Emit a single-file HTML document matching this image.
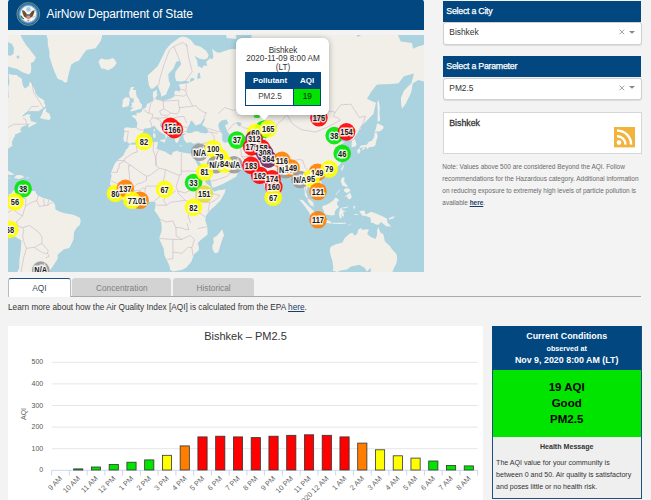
<!DOCTYPE html>
<html><head><meta charset="utf-8"><style>
html,body{margin:0;padding:0;width:651px;height:500px;overflow:hidden;background:#f3f3f3;font-family:"Liberation Sans",sans-serif}
.t{position:absolute;white-space:nowrap}
</style></head><body>
<div style="position:absolute;left:8px;top:-1px;width:416px;height:30.5px;background:#02477f;border-radius:4px 4px 0 0"></div>
<svg style="position:absolute;left:15px;top:2px" width="27" height="26" viewBox="0 0 27 26">
<circle cx="13.3" cy="12" r="11.4" fill="#1d5c97" stroke="#a7b46e" stroke-width="0.7"/>
<circle cx="13.3" cy="12" r="10.2" fill="#3f80bf"/>
<circle cx="13.3" cy="12" r="9" fill="#7fb3df"/>
<circle cx="13.3" cy="12" r="7.9" fill="#f6f6f2"/>
<circle cx="13.5" cy="7.4" r="2.3" fill="#a9cde0"/>
<path d="M7,8 L9.5,9 L11.5,11.5 L12.5,14.5 L11.5,16 L9,14.5 L7.5,11Z M19.6,8 L17.1,9 L15.1,11.5 L14.1,14.5 L15.1,16 L17.6,14.5 L19.1,11Z" fill="#6e4f2a"/>
<rect x="11.6" y="12.6" width="3.6" height="4.6" rx="1" fill="#e08a8e"/>
<rect x="11.6" y="12.4" width="3.6" height="1.3" fill="#3e5e9e"/>
<path d="M6,13.8 C6.5,15.5 7.5,16.5 9,17" stroke="#3f7f3a" stroke-width="1.3" fill="none"/>
<path d="M17.5,15.5 L20.5,14" stroke="#c8c8c0" stroke-width="0.9"/>
<path d="M12,18.2 L14.6,18.2 L13.3,19.4Z" fill="#7a6a50"/>
</svg>
<div class="t" style="left:46.50px;top:7.84px;font-size:12px;line-height:12px;color:#fff;letter-spacing:-0.12px">AirNow Department of State</div>
<div style="position:absolute;left:8px;top:35px;width:416px;height:237px;overflow:hidden"><svg width="416" height="237" viewBox="0 0 416 237" style="position:absolute;left:0;top:0"><rect width="416" height="237" fill="#aad3df"/><path d="M-36.6,121.2 -5.4,120.6 -4.6,117.2 -1.7,114.9 0.3,113.4 2.5,112.0 4.5,110.8 3.7,107.3 4.3,106.2 5.2,104.1 5.5,103.0 6.9,101.5 7.0,99.5 11.2,97.7 13.7,96.6 12.1,95.5 13.4,92.3 16.3,91.1 18.4,90.2 18.9,89.2 22.6,88.5 20.1,90.2 20.8,92.7 24.5,90.2 28.2,88.5 30.2,86.3 28.8,87.8 27.2,87.3 23.0,86.3 22.5,84.4 21.6,81.6 23.0,79.9 19.8,79.1 13.7,81.9 16.3,78.8 19.8,76.2 23.8,76.0 30.5,76.2 35.4,73.1 37.7,70.9 35.6,66.7 37.2,67.3 35.1,64.4 30.5,62.1 27.7,58.5 26.3,53.8 23.8,49.0 22.1,46.3 20.5,51.3 16.4,53.5 14.6,49.6 13.7,43.5 10.5,41.8 8.7,40.0 4.3,39.7 0.5,38.9 1.5,47.3 0.1,52.4 0.7,62.1 -1.9,65.3 -1.4,72.8 -36.6,74.1Z M31.7,82.9 33.9,79.4 35.1,75.5 38.1,72.5 37.9,76.8 41.3,78.6 42.8,83.1 41.4,85.1 37.6,84.4 31.7,82.9Z M8.7,-42.7 20.5,-29.2 33.0,-24.4 37.2,-14.8 38.1,-0.6 39.8,4.6 39.8,9.5 41.4,16.4 41.4,21.7 43.1,27.1 45.1,33.0 47.3,38.6 49.8,43.9 54.0,45.3 56.6,47.6 59.1,47.0 59.9,42.1 61.6,35.6 63.3,29.5 67.5,26.7 70.8,25.8 75.9,18.2 78.4,15.1 87.6,13.2 92.7,6.1 94.0,2.0 94.3,-6.0 97.7,-21.1 101.1,-42.7 89.3,-81.9 30.5,-81.9Z M90.5,27.1 93.2,33.4 96.0,33.7 100.2,35.2 104.4,33.0 106.9,30.7 108.6,27.9 106.4,24.2 104.4,22.9 101.1,24.6 96.9,24.6 93.5,23.4 91.8,24.6Z M121.7,76.5 125.4,76.0 133.6,73.6 134.1,69.5 131.8,67.6 131.1,64.4 128.6,61.2 127.8,56.6 128.3,55.1 124.6,55.1 126.2,51.9 122.9,51.9 120.9,57.9 121.9,62.1 123.1,63.3 125.6,63.3 125.9,67.3 123.4,67.8 124.2,70.6 122.4,72.0 125.9,73.1 124.2,73.6Z M121.2,67.8 120.7,70.9 115.3,72.5 114.0,71.2 114.8,67.3 114.5,65.3 117.3,62.4 121.0,62.4 122.0,65.0Z M121.9,108.9 120.7,108.1 118.9,106.6 116.2,107.0 115.3,103.4 116.3,98.4 116.5,95.0 115.7,93.9 117.8,92.3 124.6,93.0 128.8,92.7 129.3,88.0 127.6,84.1 123.4,80.9 126.2,79.9 128.6,80.4 128.6,77.6 131.6,78.1 134.0,76.2 134.5,74.1 137.2,73.1 138.3,71.4 139.3,68.7 143.0,67.3 145.6,66.1 144.9,61.5 145.0,57.0 149.1,54.8 148.6,58.5 149.6,59.1 147.6,63.0 149.6,64.7 152.3,64.7 154.8,65.9 162.3,63.8 166.5,61.5 166.5,57.0 168.2,55.1 171.6,57.0 172.1,52.6 170.7,50.0 172.8,49.0 178.3,48.6 182.0,47.6 178.3,45.6 173.3,46.6 168.2,46.0 167.0,41.4 167.4,36.7 173.3,29.1 171.9,25.8 168.2,26.7 165.4,33.7 160.3,38.9 160.7,45.3 162.3,49.6 159.0,57.0 158.1,59.4 153.1,61.8 152.8,58.2 151.3,54.8 149.2,49.0 148.9,50.6 144.7,53.8 143.0,53.8 140.9,50.6 140.2,46.0 139.7,40.4 145.6,34.9 149.8,31.0 155.5,19.5 158.1,14.2 163.2,8.5 171.6,2.5 174.6,1.5 179.1,2.5 183.3,5.6 186.7,9.9 192.6,11.8 198.4,16.0 200.6,19.9 199.3,23.4 195.9,24.6 190.9,23.4 186.4,20.8 189.2,25.8 189.7,31.0 192.6,32.2 194.2,33.4 195.1,30.7 199.3,30.7 198.1,27.1 201.8,23.4 204.3,24.2 205.5,21.7 204.8,17.3 204.0,13.7 208.5,17.3 211.9,17.8 215.2,16.4 222.0,14.2 230.4,13.7 232.9,8.0 238.7,9.5 243.8,13.2 246.3,15.5 242.9,3.5 245.5,-6.0 252.2,-7.7 316.0,-14.8 344.5,-11.8 346.2,-6.0 349.6,2.0 354.6,-0.6 366.4,-6.0 383.2,-14.8 389.7,-0.6 392.7,6.6 404.0,8.0 405.0,13.7 410.0,11.4 417.4,9.5 420.9,12.3 433.5,14.2 433.5,29.1 428.5,31.0 431.9,38.6 423.5,41.1 415.9,46.6 410.4,44.9 404.8,48.3 403.3,57.0 401.5,61.0 397.4,69.2 394.2,73.6 393.2,70.1 392.9,63.0 395.9,55.7 403.3,48.3 406.0,38.6 395.9,41.2 390.5,48.3 383.5,49.0 368.9,49.6 363.0,57.0 359.0,63.8 363.5,66.1 368.0,67.8 365.4,79.1 360.0,84.6 352.8,91.8 352.8,93.7 350.7,95.5 349.1,98.4 346.2,102.8 348.6,109.1 347.9,111.0 343.7,112.4 343.5,109.1 344.2,106.0 341.2,104.9 340.3,101.0 335.3,103.2 334.5,98.8 330.3,102.8 329.1,103.0 330.8,106.0 337.0,107.0 333.3,109.1 331.9,111.2 331.4,112.2 336.0,119.2 336.1,121.4 332.8,127.6 331.9,129.7 329.4,131.7 323.0,135.6 317.7,137.0 316.0,139.2 315.5,137.0 310.4,138.5 308.9,141.5 314.0,147.7 314.8,153.7 311.0,156.3 307.3,159.5 307.6,157.1 306.8,156.3 304.2,155.4 300.9,152.5 300.0,151.1 297.9,157.1 299.2,160.5 300.0,163.1 305.1,167.3 305.9,171.8 302.6,170.3 300.0,166.4 299.7,163.9 296.7,160.2 296.8,157.1 295.8,152.0 295.3,145.9 292.5,145.4 290.0,146.8 289.5,142.4 286.3,138.3 285.4,135.4 283.2,136.1 280.7,136.5 279.0,136.8 277.4,137.9 276.5,139.7 271.2,143.8 269.5,145.9 266.1,147.7 266.1,151.8 265.4,156.6 261.4,160.4 259.4,158.0 257.2,152.9 255.2,147.7 253.5,141.5 253.2,137.0 253.0,135.6 249.7,138.3 247.1,135.6 246.3,133.4 243.8,131.0 242.9,129.9 235.9,130.4 230.0,129.7 227.0,126.7 222.0,127.5 216.6,123.3 212.7,121.2 211.9,122.5 215.6,127.8 217.8,128.8 217.3,131.4 222.6,131.6 224.1,130.1 225.8,128.0 226.0,131.4 229.7,133.2 231.7,135.2 229.5,138.8 228.3,141.5 223.6,144.2 222.0,145.0 218.6,147.0 213.6,149.4 206.8,152.3 204.2,152.5 203.3,148.9 202.6,145.2 201.0,143.3 198.4,138.8 197.1,137.0 195.9,133.4 193.4,129.7 190.9,126.0 189.9,122.3 188.9,118.6 190.1,115.7 190.9,113.4 191.4,111.2 191.9,107.9 189.4,107.5 185.9,108.9 182.8,107.3 178.3,107.7 177.1,106.0 175.8,103.9 175.3,101.7 175.6,100.2 178.3,98.4 180.0,98.2 174.9,98.8 169.7,99.3 171.6,100.6 171.1,105.1 169.1,108.1 167.7,107.5 166.7,104.3 164.0,100.6 163.9,96.6 161.5,94.8 158.8,92.7 154.8,89.2 154.3,87.8 151.9,88.3 152.3,91.6 153.9,92.5 158.1,96.4 162.3,100.4 159.8,102.8 160.2,99.5 159.0,101.7 157.5,104.9 157.6,100.6 155.1,98.8 151.9,96.8 148.9,93.9 146.2,90.6 143.5,92.3 140.2,93.2 136.3,93.4 135.0,97.5 132.8,99.1 130.8,101.7 131.6,103.2 129.6,105.8 127.1,107.5 123.9,107.7Z M121.5,109.6 130.3,109.8 136.3,107.5 144.4,107.3 149.8,106.8 149.4,111.8 148.2,113.4 153.4,115.5 156.6,116.4 163.2,120.6 165.0,117.0 169.2,115.7 171.6,117.0 181.5,118.8 183.3,118.0 185.5,118.6 188.7,118.6 189.9,122.1 188.9,125.4 186.0,121.4 186.9,124.0 188.0,126.5 190.9,132.5 193.1,136.1 193.7,140.4 195.9,143.3 197.6,147.5 201.0,150.6 203.0,152.0 203.8,154.4 206.0,156.4 206.8,156.4 211.0,155.1 213.9,154.9 217.4,153.9 217.1,156.3 216.6,158.0 214.9,160.9 212.7,165.1 207.3,170.7 202.6,174.7 200.0,177.9 197.9,180.7 197.3,185.5 199.3,191.7 199.6,199.5 193.2,204.6 189.7,207.9 190.9,211.9 190.7,215.4 186.0,219.2 183.3,226.7 178.1,232.8 174.3,234.8 164.9,236.4 162.2,234.8 161.5,230.8 156.8,221.1 156.6,220.4 155.6,213.5 151.1,203.5 153.8,195.3 153.4,188.8 151.9,184.1 151.1,182.1 146.4,175.2 147.1,173.3 147.6,167.3 145.6,166.4 141.4,166.8 137.0,163.2 131.3,164.8 127.9,166.1 124.6,165.1 118.7,166.6 113.1,163.4 109.1,159.7 108.3,158.0 105.3,154.6 101.9,149.1 103.6,140.6 102.7,137.9 106.9,128.6 109.5,125.2 115.2,120.4 118.5,114.0 119.9,113.2Z M214.1,194.3 216.1,200.4 214.7,203.0 211.9,211.9 210.2,217.4 206.8,218.3 204.7,214.6 204.3,211.0 205.8,207.4 205.2,203.0 209.0,200.7 211.5,197.8Z M145.4,102.8 147.7,102.6 147.4,98.4 145.0,98.4Z M145.7,97.5 147.2,95.0 146.9,93.9 145.7,94.3Z M152.1,104.9 157.5,104.3 156.6,107.7 152.3,105.8Z M170.7,110.2 175.4,110.8 172.8,111.4Z M185.5,111.8 189.2,110.0 187.5,110.4 185.9,110.8Z M218.6,3.0 228.7,4.1 227.0,-3.3 225.3,-14.8 232.0,-35.0 215.2,-35.0Z M265.3,163.9 265.4,159.7 265.8,157.5 267.3,159.7 268.6,161.4 268.1,163.4 266.5,164.1Z M351.1,113.2 352.9,110.4 358.8,109.8 361.0,106.4 363.8,106.0 366.4,101.3 366.4,98.0 368.9,97.5 369.7,101.7 367.9,107.0 367.7,109.8 366.0,111.4 364.4,112.0 361.3,112.0 359.6,114.2 358.0,112.0 354.6,112.6Z M349.1,114.9 351.3,113.4 352.8,115.3 351.3,118.6 349.9,118.6Z M353.8,115.3 357.5,113.6 356.3,112.6 354.4,113.2Z M366.4,97.3 368.0,93.4 369.1,88.3 375.3,90.9 375.6,93.2 372.2,96.2 368.0,96.6Z M369.7,86.8 372.2,85.6 371.4,78.1 371.9,72.8 370.6,65.0 369.2,67.6 369.7,76.8 369.6,85.6Z M332.9,134.3 335.3,130.1 336.1,130.6 334.1,136.1 333.8,135.6Z M313.6,141.1 316.8,139.5 317.7,140.4 315.2,142.9Z M333.8,142.4 336.6,142.4 336.1,146.4 339.5,151.0 339.2,152.3 334.3,150.6 332.8,146.3Z M336.1,162.2 342.0,157.6 343.9,161.9 341.8,164.6 339.5,163.2 338.7,160.9Z M340.0,152.9 342.4,155.1 341.2,157.1 338.7,158.0 336.1,156.3 336.1,154.1Z M328.1,160.0 332.1,154.7 331.6,154.6 327.7,159.5Z M314.3,171.5 315.3,170.7 318.5,169.8 321.0,168.6 325.2,165.6 327.4,162.4 328.6,163.1 331.4,165.3 329.4,166.8 328.9,169.0 330.9,172.3 328.6,174.0 326.9,176.5 326.6,179.9 323.5,180.6 318.5,179.4 316.3,178.9 316.0,176.2 314.3,173.2Z M291.3,164.6 295.0,165.3 299.7,170.3 305.6,175.7 306.8,178.2 309.3,179.4 308.9,183.8 306.8,183.9 303.1,180.7 299.9,175.7 296.8,171.2 294.5,168.5Z M307.9,185.5 310.1,184.1 313.1,184.6 317.7,184.8 320.4,185.6 323.4,187.0 323.5,188.7 317.7,187.8 312.6,187.1 309.9,186.5Z M324.4,187.8 331.1,187.8 337.8,187.8 337.8,188.8 331.1,189.0 324.4,188.8Z M339.5,190.9 344.9,188.2 341.2,189.4Z M330.8,179.0 331.9,174.0 332.8,173.0 340.3,171.5 341.5,171.3 337.8,173.2 333.3,173.3 335.3,175.7 338.2,175.7 335.3,177.2 336.1,181.6 334.5,181.6 333.6,178.4 333.5,183.4 331.8,183.3Z M345.4,170.7 347.4,171.5 346.2,174.0 347.1,175.4 345.4,173.2Z M346.2,179.0 350.9,179.4 350.4,180.1 346.6,179.9Z M351.3,176.0 356.3,175.5 358.0,179.6 363.0,176.7 368.0,178.4 376.1,182.1 379.0,184.1 379.5,187.5 383.2,191.4 378.1,191.2 373.1,187.1 370.6,189.7 368.0,189.4 364.7,187.7 363.0,188.0 362.5,182.8 357.1,180.7 354.3,180.7 352.9,178.7Z M380.6,183.3 386.5,181.1 385.7,183.3 381.5,184.4Z M322.7,211.7 327.2,209.4 334.5,207.4 336.5,203.3 341.8,198.6 344.5,197.8 346.2,200.4 349.1,199.3 350.1,194.8 352.9,192.9 354.1,194.7 359.6,194.3 361.0,194.8 359.1,199.0 362.7,201.9 367.7,203.9 369.1,199.5 369.1,195.3 370.6,192.1 372.2,197.4 375.4,199.3 376.9,206.5 381.8,211.0 384.8,215.2 388.5,219.1 389.2,223.8 388.2,228.8 385.2,234.6 383.2,242.0 376.4,245.2 368.0,243.1 365.5,241.0 363.0,238.3 362.7,232.8 359.6,235.8 359.1,236.6 356.3,232.6 351.3,229.8 342.9,231.4 339.0,234.6 332.4,235.6 329.3,237.0 324.4,235.4 325.4,233.4 324.4,225.9 322.7,220.4 321.7,215.5Z M1.3,159.5 3.7,158.3 4.5,156.3 6.7,154.9 9.9,153.9 11.2,156.1 11.7,154.1 13.7,153.4 17.1,156.1 20.5,156.1 23.8,155.9 27.2,155.9 27.8,158.0 29.2,159.7 32.2,161.4 33.7,162.6 38.9,164.1 41.4,164.8 44.0,165.9 45.3,167.1 47.3,171.0 47.3,174.0 49.8,176.0 56.6,178.2 61.6,178.9 66.6,180.2 72.0,182.8 72.7,186.6 71.7,190.0 68.8,192.6 66.0,196.9 65.5,204.2 63.6,208.8 61.1,213.3 58.7,213.5 55.7,214.6 49.8,219.6 49.5,224.0 46.5,228.8 42.6,234.6 39.1,236.6 35.6,236.8 33.9,235.8 35.6,239.5 34.7,243.5 27.2,245.2 8.7,245.2 7.9,241.0 11.2,232.8 11.4,224.9 12.9,213.7 13.4,205.6 5.3,200.4 3.3,196.9 0.3,190.9 -2.2,186.1 -5.1,184.1 -3.9,179.7 -4.4,175.7 -3.1,172.7 -1.0,171.3 1.1,168.0 1.3,163.1 0.5,161.7Z M1.3,159.5 -1.4,158.0 -4.7,159.2 -8.9,157.1 -9.8,155.4 -19.8,146.8 -19.8,160.5Z M-11.5,136.5 -3.1,134.1 1.6,136.7 6.9,139.4 0.8,140.1 -0.5,137.0 -3.1,136.5Z M6.2,142.4 9.0,139.9 13.7,140.3 16.6,142.2 13.7,142.9 11.2,144.0 6.3,143.1Z M18.4,142.6 21.1,142.6 21.1,143.3 18.4,143.3Z M-0.2,142.6 3.3,143.1 2.8,143.5 -0.0,142.9Z M-8.0,-5.0 12.6,0.2 15.0,5.2 18.0,10.0 21.0,13.6 25.2,19.0 27.9,22.6 25.8,26.8 22.8,28.0 23.4,32.8 22.8,37.6 21.0,39.4 15.0,37.6 9.0,34.0 4.2,32.8 0.0,31.6 -8.0,31.0Z" fill="#f2efe9"/><path d="M178.3,97.3 179.3,93.0 181.7,88.7 182.8,85.6 185.0,86.8 187.5,90.6 192.6,88.7 195.1,84.4 197.3,84.1 195.1,88.0 194.2,89.9 197.9,92.5 201.1,97.1 197.9,98.4 192.2,97.7 190.1,96.2 186.7,96.6 183.3,98.0 180.0,98.0Z M213.6,85.6 218.4,84.4 220.3,88.5 216.9,90.4 219.9,97.3 222.0,99.5 221.6,103.2 222.0,106.4 216.9,107.7 214.4,106.0 214.1,101.7 214.4,99.5 212.7,96.6 211.0,93.9 210.2,90.4 211.0,88.0Z M184.7,174.3 187.5,173.5 188.7,174.8 188.0,177.9 185.9,178.7 184.5,177.0Z M305.6,72.5 308.4,70.3 313.5,65.9 315.7,60.9 314.8,60.6 311.0,67.3 306.8,71.4Z M181.7,47.3 186.4,44.9 185.9,42.9 182.5,43.2Z M228.7,86.8 233.7,88.0 232.0,91.6 229.5,90.4Z M254.7,85.1 262.3,85.6 263.9,85.6 255.5,87.5Z M189.2,43.9 192.6,42.9 191.7,37.5 189.7,38.6Z M-8.0,5.0 0.0,7.0 4.0,9.0 6.0,13.0 5.5,19.0 2.0,21.0 0.0,20.0 -8.0,20.0Z M8.5,21.0 11.0,20.5 11.5,23.0 9.0,23.5Z" fill="#aad3df"/><path d="M128.3,93.0 131.3,94.6 136.7,95.3 M135.5,73.9 138.3,77.0 141.0,78.1 145.0,79.4 144.0,82.9 141.5,86.3 143.0,87.1 143.9,92.0 M116.3,96.4 120.4,96.4 119.7,100.6 118.9,106.6 M143.0,67.8 141.4,74.7 141.0,78.1 M145.7,63.3 155.1,66.1 M155.1,66.1 155.8,74.1 151.6,76.0 153.1,79.9 159.8,80.4 162.8,78.1 156.5,74.1 M144.0,82.9 147.2,83.1 153.1,83.1 159.8,81.9 M147.2,83.1 151.4,84.9 154.1,88.0 M155.1,66.1 170.7,65.3 170.7,70.1 171.7,74.9 169.2,79.1 162.8,78.1 M166.7,60.3 175.9,61.2 178.3,59.7 M167.6,55.4 172.3,54.1 177.3,55.4 M178.3,49.0 177.8,55.4 178.6,59.4 184.7,71.2 187.7,70.6 190.1,73.6 195.6,77.0 198.4,77.8 195.4,84.1 M170.9,72.8 184.7,71.2 M169.7,81.9 175.9,81.4 178.6,88.0 M169.4,91.1 179.3,92.3 M158.7,85.6 169.7,81.9 M154.1,88.0 163.2,89.5 169.4,91.1 M163.9,96.2 169.9,97.7 175.9,97.3 M178.3,8.5 180.8,22.9 184.2,36.7 177.8,45.6 M171.7,25.8 165.9,11.4 M150.6,50.6 151.8,43.9 155.6,30.7 161.7,14.6 165.9,11.4 174.9,7.5 179.8,11.6 M175.1,96.8 178.3,96.2 M191.6,109.3 202.5,106.8 206.5,106.6 206.0,101.3 202.8,97.1 201.0,97.3 M202.5,106.8 200.5,112.4 196.4,114.4 193.4,116.6 190.1,122.1 M196.4,114.4 206.3,122.7 211.7,123.0 M206.5,106.6 207.7,109.6 208.7,115.1 211.4,118.4 211.9,121.2 M203.1,146.1 209.7,144.5 218.6,141.5 224.6,136.1 224.0,134.9 217.9,132.1 M221.8,106.4 227.7,104.9 234.0,107.9 232.9,113.8 233.5,121.5 236.7,124.6 234.7,130.3 M234.0,107.9 239.6,106.6 245.1,106.6 251.3,105.1 257.1,106.2 251.5,108.1 250.7,112.2 247.6,117.4 242.8,121.4 233.5,121.5 M261.9,110.2 256.4,115.9 256.5,119.2 250.5,125.0 248.0,127.3 245.8,133.0 M261.9,110.2 263.9,116.3 266.5,120.4 272.3,123.9 279.2,125.2 280.4,126.3 285.8,125.4 291.6,124.6 294.7,125.2 M279.9,136.8 281.1,129.0 285.9,130.6 286.4,137.9 M294.7,125.2 297.0,132.3 301.2,137.0 299.4,139.0 296.2,146.8 297.9,156.3 M301.2,137.0 304.2,135.2 310.4,134.7 312.6,137.0 M304.2,135.2 306.8,139.7 311.8,148.2 309.3,154.6 M303.4,153.7 308.9,149.6 311.8,148.2 M299.4,163.1 302.7,163.6 M278.7,79.1 284.1,88.5 293.2,94.6 307.6,97.1 319.0,92.3 332.6,85.1 329.1,82.4 325.2,81.6 327.2,77.3 M278.7,79.1 285.8,74.9 295.8,71.4 302.6,73.3 310.1,76.0 322.7,76.2 327.2,77.3 M327.2,77.3 332.8,69.8 342.9,69.2 351.3,82.6 357.5,81.1 354.9,89.0 351.3,94.3 350.6,95.3 M340.0,100.8 348.7,95.3 M343.0,105.6 346.9,103.6 M278.7,79.1 274.8,84.4 270.0,88.3 266.0,95.7 258.2,99.3 257.1,106.2 M216.6,72.5 224.8,75.2 234.4,74.7 233.7,66.7 247.3,61.8 259.7,65.3 270.3,74.1 278.7,79.1 M210.2,78.8 216.6,72.5 M220.3,95.0 225.3,89.2 229.5,87.8 235.4,92.7 242.1,93.9 246.5,99.3 250.5,95.5 254.5,95.0 266.0,95.7 M225.3,97.7 233.7,98.0 239.6,104.9 M248.0,100.6 254.9,101.9 M198.4,93.0 209.7,96.4 212.9,96.6 M202.8,97.1 209.4,98.4 M128.4,111.0 129.3,117.0 125.2,118.0 116.7,123.7 116.7,125.6 109.1,125.6 M102.7,137.2 109.5,137.4 109.5,134.3 111.1,133.4 111.1,128.8 116.7,126.3 123.2,130.6 120.4,130.6 122.0,147.7 112.0,147.7 110.8,149.1 103.6,146.3 M123.2,130.6 133.3,137.9 138.5,141.1 141.0,140.8 151.4,133.4 M145.7,107.3 145.0,115.3 147.2,120.8 M150.6,115.1 148.1,120.2 148.1,130.6 151.4,133.4 156.5,134.3 M173.3,118.0 173.3,136.1 193.2,136.1 M156.5,134.3 171.6,140.6 171.6,139.7 173.3,139.7 173.3,136.1 M110.8,149.1 112.1,153.0 117.8,156.3 122.0,156.4 126.6,155.6 132.0,155.4 135.0,152.7 137.3,154.2 138.2,151.1 154.3,151.1 156.8,139.7 157.3,134.3 M138.5,141.1 138.5,145.2 132.0,148.7 130.4,148.4 127.9,149.9 122.2,156.4 M135.8,163.4 137.3,154.2 M155.1,151.8 155.6,153.2 153.8,158.0 151.1,162.2 146.1,166.1 M171.6,140.6 168.2,151.5 170.7,158.8 177.3,165.3 M157.3,161.4 163.2,158.8 168.2,155.6 M155.6,152.9 157.3,161.4 155.6,165.6 158.5,170.3 147.6,170.1 M158.5,170.3 162.3,167.3 171.6,166.1 177.3,165.3 183.0,168.1 M169.6,155.9 176.6,157.8 186.7,153.7 188.5,158.0 M192.6,149.7 188.5,158.0 187.5,164.8 191.6,166.3 201.6,167.5 206.8,165.6 211.9,160.5 205.2,158.8 203.5,155.4 M192.6,149.7 195.8,144.0 M201.6,167.5 200.1,176.9 M197.3,181.9 188.2,175.7 M183.0,168.1 181.2,176.2 180.3,181.6 182.7,188.3 M151.8,184.1 158.1,187.0 164.9,185.8 167.9,192.6 171.6,192.6 174.1,193.1 177.1,194.3 180.8,194.7 179.1,188.2 M199.3,191.7 189.9,193.5 M168.2,201.2 173.8,204.4 182.3,200.5 M151.1,203.5 164.9,204.4 173.8,204.4 M164.9,211.9 164.9,217.0 M159.0,224.2 164.9,223.8 164.9,217.0 174.1,218.3 180.0,212.3 183.8,212.6 185.0,220.7 M183.8,212.6 186.5,204.7 182.3,200.5 M126.6,165.6 126.6,155.6 M133.3,163.7 131.3,155.4 M112.1,162.2 117.8,156.3 M103.2,153.2 110.8,152.5 110.8,149.1 M147.2,120.8 148.1,130.6 M167.9,192.6 168.2,201.2 M164.9,204.4 164.9,211.9 M10.5,153.7 9.5,161.7 17.9,163.9 17.4,171.0 M30.5,159.5 28.8,165.6 23.8,167.3 17.4,171.0 M35.6,163.9 36.4,170.7 M40.6,164.8 39.8,170.1 M44.8,166.8 39.8,170.1 36.4,170.7 31.4,171.5 28.8,165.6 M17.4,171.0 14.4,181.1 8.7,177.4 M-3.6,179.7 5.0,174.2 M-1.4,172.0 5.0,174.2 8.7,177.4 M14.4,181.1 8.7,186.6 9.5,190.9 14.4,192.6 M14.4,192.6 21.5,190.5 30.5,196.9 33.9,201.8 33.9,208.3 26.2,212.4 18.4,213.3 15.4,205.5 14.7,200.4 15.9,195.2 14.4,192.6 M33.9,208.3 40.1,215.5 39.6,218.5 41.3,221.3 37.6,223.0 M18.4,213.3 16.1,221.1 13.7,232.8 12.1,245.2 M41.6,234.2 34.6,227.2 M26.2,212.4 34.6,217.9 39.6,218.5 M18.8,89.2 11.2,89.2 5.7,89.2 -1.4,93.2 M15.1,83.4 17.4,84.1 18.8,89.2 M23.8,46.3 25.5,57.0 35.4,73.1 M19.8,76.2 23.8,71.4 30.5,71.4" fill="none" stroke="#c8b6c8" stroke-width="0.6" stroke-linejoin="round"/></svg><svg width="416" height="237" style="position:absolute;left:0;top:0"><style>.mt text{font-family:"Liberation Sans";font-weight:bold;font-size:9.3px;text-anchor:middle;fill:#1a1a1a;stroke:#fff;stroke-width:3px;stroke-opacity:0.85;paint-order:stroke}</style><circle cx="136.0" cy="106.6" r="8.8" fill="#ffff00" fill-opacity="0.9"/><circle cx="162.4" cy="91.4" r="8.8" fill="#ff0000" fill-opacity="0.9"/><circle cx="166.4" cy="94.6" r="8.8" fill="#ff0000" fill-opacity="0.9"/><circle cx="107.4" cy="158.4" r="8.8" fill="#ffff00" fill-opacity="0.9"/><circle cx="117.3" cy="153.4" r="8.8" fill="#ff7e00" fill-opacity="0.9"/><circle cx="132.0" cy="165.3" r="8.8" fill="#ff7e00" fill-opacity="0.9"/><circle cx="123.9" cy="165.3" r="8.8" fill="#ffff00" fill-opacity="0.9"/><circle cx="156.6" cy="154.4" r="8.8" fill="#ffff00" fill-opacity="0.9"/><circle cx="185.5" cy="147.6" r="8.8" fill="#00e400" fill-opacity="0.9"/><circle cx="196.2" cy="159.0" r="8.8" fill="#e4dd3a" fill-opacity="0.9"/><circle cx="185.5" cy="172.3" r="8.8" fill="#ffff00" fill-opacity="0.9"/><circle cx="15.1" cy="153.7" r="8.8" fill="#00e400" fill-opacity="0.9"/><circle cx="7.0" cy="166.9" r="8.8" fill="#ffff00" fill-opacity="0.9"/><circle cx="1.9" cy="194.4" r="8.8" fill="#ffff00" fill-opacity="0.9"/><circle cx="32.7" cy="235.1" r="8.8" fill="#9a9a9a" fill-opacity="0.9"/><circle cx="191.7" cy="117.2" r="8.8" fill="#9a9a9a" fill-opacity="0.9"/><circle cx="205.2" cy="113.7" r="8.8" fill="#ffff00" fill-opacity="0.9"/><circle cx="211.3" cy="122.0" r="8.8" fill="#ffff00" fill-opacity="0.9"/><circle cx="207.6" cy="129.7" r="8.8" fill="#9a9a9a" fill-opacity="0.9"/><circle cx="226.0" cy="129.7" r="8.8" fill="#9a9a9a" fill-opacity="0.9"/><circle cx="216.2" cy="129.1" r="8.8" fill="#ffff00" fill-opacity="0.9"/><circle cx="196.6" cy="137.1" r="8.8" fill="#ffff00" fill-opacity="0.9"/><circle cx="228.8" cy="105.1" r="8.8" fill="#00e400" fill-opacity="0.9"/><circle cx="255.8" cy="94.2" r="8.8" fill="#00e400" fill-opacity="0.9"/><circle cx="260.2" cy="93.8" r="8.8" fill="#ffff00" fill-opacity="0.9"/><circle cx="247.4" cy="97.6" r="8.8" fill="#ffff00" fill-opacity="0.9"/><circle cx="246.1" cy="103.9" r="8.8" fill="#7a1a30" fill-opacity="0.9"/><circle cx="243.7" cy="111.9" r="8.8" fill="#ff0000" fill-opacity="0.9"/><circle cx="253.5" cy="113.1" r="8.8" fill="#ff0000" fill-opacity="0.9"/><circle cx="256.6" cy="118.0" r="8.8" fill="#6a2460" fill-opacity="0.9"/><circle cx="260.3" cy="124.1" r="8.8" fill="#6a2460" fill-opacity="0.9"/><circle cx="277.5" cy="134.7" r="8.8" fill="#9a9a9a" fill-opacity="0.9"/><circle cx="283.0" cy="133.0" r="8.8" fill="#ff7e00" fill-opacity="0.9"/><circle cx="273.8" cy="125.2" r="8.8" fill="#ff7e00" fill-opacity="0.9"/><circle cx="243.0" cy="130.4" r="8.8" fill="#ff0000" fill-opacity="0.9"/><circle cx="251.7" cy="140.2" r="8.8" fill="#ff0000" fill-opacity="0.9"/><circle cx="264.0" cy="143.9" r="8.8" fill="#ff0000" fill-opacity="0.9"/><circle cx="265.8" cy="151.9" r="8.8" fill="#ff0000" fill-opacity="0.9"/><circle cx="265.2" cy="162.3" r="8.8" fill="#ffff00" fill-opacity="0.9"/><circle cx="292.0" cy="144.5" r="8.8" fill="#9a9a9a" fill-opacity="0.9"/><circle cx="309.3" cy="137.4" r="8.8" fill="#ff7e00" fill-opacity="0.9"/><circle cx="303.0" cy="143.2" r="8.8" fill="#ffff00" fill-opacity="0.9"/><circle cx="321.2" cy="134.1" r="8.8" fill="#ffff00" fill-opacity="0.9"/><circle cx="310.0" cy="156.5" r="8.8" fill="#ff7e00" fill-opacity="0.9"/><circle cx="310.0" cy="184.8" r="8.8" fill="#ff7e00" fill-opacity="0.9"/><circle cx="310.9" cy="82.8" r="8.8" fill="#ff0000" fill-opacity="0.9"/><circle cx="326.2" cy="100.6" r="8.8" fill="#00e400" fill-opacity="0.9"/><circle cx="338.5" cy="96.9" r="8.8" fill="#ff0000" fill-opacity="0.9"/><circle cx="334.2" cy="118.4" r="8.8" fill="#00e400" fill-opacity="0.9"/><ellipse cx="248.8" cy="81.4" rx="3.2" ry="1.6" fill="#00e400" fill-opacity="0.8"/><g class="mt"><text transform="translate(136.0,109.9) scale(0.8,1)">82</text><text transform="translate(162.4,94.7) scale(0.8,1)">151</text><text transform="translate(166.4,97.9) scale(0.8,1)">166</text><text transform="translate(107.4,161.7) scale(0.8,1)">80</text><text transform="translate(117.3,156.7) scale(0.8,1)">137</text><text transform="translate(132.0,168.6) scale(0.8,1)">101</text><text transform="translate(123.9,168.6) scale(0.8,1)">77</text><text transform="translate(156.6,157.7) scale(0.8,1)">67</text><text transform="translate(185.5,150.9) scale(0.8,1)">33</text><text transform="translate(196.2,162.3) scale(0.8,1)">151</text><text transform="translate(185.5,175.6) scale(0.8,1)">82</text><text transform="translate(15.1,157.0) scale(0.8,1)">38</text><text transform="translate(7.0,170.2) scale(0.8,1)">56</text><text transform="translate(1.9,197.7) scale(0.8,1)">68</text><text transform="translate(32.7,238.4) scale(0.8,1)">N/A</text><text transform="translate(191.7,120.5) scale(0.8,1)">N/A</text><text transform="translate(205.2,117.0) scale(0.8,1)">100</text><text transform="translate(211.3,125.3) scale(0.8,1)">79</text><text transform="translate(207.6,133.0) scale(0.8,1)">N/A</text><text transform="translate(226.0,133.0) scale(0.8,1)">N/A</text><text transform="translate(216.2,132.4) scale(0.8,1)">84</text><text transform="translate(196.6,140.4) scale(0.8,1)">81</text><text transform="translate(228.8,108.4) scale(0.8,1)">37</text><text transform="translate(255.8,97.5) scale(0.8,1)"></text><text transform="translate(260.2,97.1) scale(0.8,1)">165</text><text transform="translate(247.4,100.9) scale(0.8,1)">60</text><text transform="translate(246.1,107.2) scale(0.8,1)">312</text><text transform="translate(243.7,115.2) scale(0.8,1)">175</text><text transform="translate(253.5,116.4) scale(0.8,1)">158</text><text transform="translate(256.6,121.3) scale(0.8,1)">308</text><text transform="translate(260.3,127.4) scale(0.8,1)">364</text><text transform="translate(277.5,138.0) scale(0.8,1)">N/A</text><text transform="translate(283.0,136.3) scale(0.8,1)">149</text><text transform="translate(273.8,128.5) scale(0.8,1)">116</text><text transform="translate(243.0,133.7) scale(0.8,1)">183</text><text transform="translate(251.7,143.5) scale(0.8,1)">162</text><text transform="translate(264.0,147.2) scale(0.8,1)">174</text><text transform="translate(265.8,155.2) scale(0.8,1)">160</text><text transform="translate(265.2,165.6) scale(0.8,1)">67</text><text transform="translate(292.0,147.8) scale(0.8,1)">N/A</text><text transform="translate(309.3,140.7) scale(0.8,1)">149</text><text transform="translate(303.0,146.5) scale(0.8,1)">95</text><text transform="translate(321.2,137.4) scale(0.8,1)">79</text><text transform="translate(310.0,159.8) scale(0.8,1)">121</text><text transform="translate(310.0,188.1) scale(0.8,1)">117</text><text transform="translate(310.9,86.1) scale(0.8,1)">175</text><text transform="translate(326.2,103.9) scale(0.8,1)">38</text><text transform="translate(338.5,100.2) scale(0.8,1)">154</text><text transform="translate(334.2,121.7) scale(0.8,1)">46</text></g></svg></div>
<div style="position:absolute;left:236.3px;top:37.6px;width:93.2px;height:77px;background:#fff;border-radius:6px;box-shadow:0 1.5px 6px rgba(0,0,0,0.3)"></div>
<svg style="position:absolute;left:257px;top:114px" width="14" height="8"><path d="M1.5,0 L7,6.2 L12.5,0Z" fill="#fff"/></svg>
<div class="t" style="left:238.00px;width:90px;text-align:center;top:47.06px;font-size:8.2px;line-height:8.2px;color:#333">Bishkek</div>
<div class="t" style="left:238.00px;width:90px;text-align:center;top:55.46px;font-size:8.2px;line-height:8.2px;color:#333">2020-11-09 8:00 AM</div>
<div class="t" style="left:238.00px;width:90px;text-align:center;top:64.06px;font-size:8.2px;line-height:8.2px;color:#333">(LT)</div>
<div style="position:absolute;left:245px;top:72.3px;width:76px;height:33.3px;background:#02477f"></div>
<div style="position:absolute;left:246px;top:88.7px;width:47.3px;height:16px;background:#fff"></div>
<div style="position:absolute;left:294px;top:88.7px;width:26.2px;height:16px;background:#00e400"></div>
<div class="t" style="left:245.00px;width:50px;text-align:center;top:76.73px;font-size:8px;line-height:8px;color:#fff;font-weight:bold">Pollutant</div>
<div class="t" style="left:292.20px;width:30px;text-align:center;top:76.73px;font-size:8px;line-height:8px;color:#fff;font-weight:bold">AQI</div>
<div class="t" style="left:245.00px;width:50px;text-align:center;top:93.06px;font-size:8.2px;line-height:8.2px;color:#444">PM2.5</div>
<div class="t" style="left:292.20px;width:30px;text-align:center;top:93.06px;font-size:8.2px;line-height:8.2px;color:#111">19</div>
<div style="position:absolute;left:443px;top:1px;width:198px;height:20.5px;background:#02477f"></div>
<div class="t" style="left:446.30px;top:6.85px;font-size:8.8px;line-height:8.8px;color:#fff;letter-spacing:-0.25px;-webkit-text-stroke:0.25px #fff">Select a City</div>
<div style="position:absolute;left:442.5px;top:22.2px;width:197.5px;height:20.5px;background:#fff;border:0.6px solid #d0d0d0;border-radius:3px;box-shadow:0 0.5px 1px rgba(0,0,0,0.1)"></div>
<div class="t" style="left:449.30px;top:27.99px;font-size:8.4px;line-height:8.4px;color:#333">Bishkek</div>
<svg style="position:absolute;left:619px;top:29.2px" width="6" height="6"><path d="M0.6,0.6 L5.2,5.2 M5.2,0.6 L0.6,5.2" stroke="#8a8a8a" stroke-width="0.8"/></svg>
<svg style="position:absolute;left:628.8px;top:30.6px" width="8" height="4"><path d="M0,0 L6,0 L3,2.8Z" fill="#888"/></svg>
<div style="position:absolute;left:443px;top:56.2px;width:198px;height:20.5px;background:#02477f"></div>
<div class="t" style="left:446.30px;top:62.05px;font-size:8.8px;line-height:8.8px;color:#fff;letter-spacing:-0.25px;-webkit-text-stroke:0.25px #fff">Select a Parameter</div>
<div style="position:absolute;left:442.5px;top:77.8px;width:197.5px;height:20.5px;background:#fff;border:0.6px solid #d0d0d0;border-radius:3px;box-shadow:0 0.5px 1px rgba(0,0,0,0.1)"></div>
<div class="t" style="left:449.30px;top:83.59px;font-size:8.4px;line-height:8.4px;color:#333">PM2.5</div>
<svg style="position:absolute;left:619px;top:84.8px" width="6" height="6"><path d="M0.6,0.6 L5.2,5.2 M5.2,0.6 L0.6,5.2" stroke="#8a8a8a" stroke-width="0.8"/></svg>
<svg style="position:absolute;left:628.8px;top:86.2px" width="8" height="4"><path d="M0,0 L6,0 L3,2.8Z" fill="#888"/></svg>
<div style="position:absolute;left:442.6px;top:111.6px;width:197.6px;height:40.6px;background:#fff;border:0.7px solid #d6d6d6"></div>
<div class="t" style="left:449.20px;top:118.55px;font-size:8.8px;line-height:8.8px;color:#333;-webkit-text-stroke:0.3px #333">Bishkek</div>
<svg style="position:absolute;left:614px;top:127.3px" width="21.3" height="20.4" viewBox="0 0 21.3 20.4"><rect width="21.3" height="20.4" fill="#f2b33d"/>
<circle cx="5" cy="15.6" r="2.3" fill="#fff"/>
<path d="M3,9.2 A8,8 0 0 1 11.4,17.6" stroke="#fff" stroke-width="2.4" fill="none"/>
<path d="M3,3.6 A13.6,13.6 0 0 1 17,17.6" stroke="#fff" stroke-width="2.4" fill="none"/></svg>
<div class="t" style="left:442.30px;top:164.12px;font-size:6.47px;line-height:6.47px;color:#6a6a6a">Note: Values above 500 are considered Beyond the AQI. Follow</div>
<div class="t" style="left:442.30px;top:175.92px;font-size:6.47px;line-height:6.47px;color:#6a6a6a">recommendations for the Hazardous category. Additional information</div>
<div class="t" style="left:442.30px;top:187.72px;font-size:6.47px;line-height:6.47px;color:#6a6a6a">on reducing exposure to extremely high levels of particle pollution is</div>
<div class="t" style="left:442.30px;top:199.52px;font-size:6.47px;line-height:6.47px;color:#6a6a6a">available <b style="color:#1a3d66;text-decoration:underline">here</b>.</div>
<div style="position:absolute;left:8px;top:296px;width:633px;height:1px;background:#a9a9a9"></div>
<div style="position:absolute;left:8px;top:278px;width:60.8px;height:18px;background:#fff;border:0.7px solid #bbb;border-top:1.3px solid #1d4f80;border-bottom:none;border-radius:3px 3px 0 0"></div>
<div style="position:absolute;left:72.4px;top:278px;width:98.8px;height:18px;background:#d3d3d3;border-radius:3px 3px 0 0"></div>
<div style="position:absolute;left:173.3px;top:278px;width:80.5px;height:18px;background:#d3d3d3;border-radius:3px 3px 0 0"></div>
<div class="t" style="left:9.40px;width:60px;text-align:center;top:283.97px;font-size:8.3px;line-height:8.3px;color:#3a4a5a">AQI</div>
<div class="t" style="left:72.80px;width:98px;text-align:center;top:284.17px;font-size:8.3px;line-height:8.3px;color:#808080">Concentration</div>
<div class="t" style="left:173.60px;width:80px;text-align:center;top:284.17px;font-size:8.3px;line-height:8.3px;color:#808080">Historical</div>
<div class="t" style="left:8.00px;top:304.32px;font-size:8.25px;line-height:8.25px;color:#333">Learn more about how the Air Quality Index [AQI] is calculated from the EPA <span style="color:#1a3d66;text-decoration:underline">here</span>.</div>
<div style="position:absolute;left:8px;top:326px;width:475.3px;height:180px;background:#fff"></div>
<svg style="position:absolute;left:0;top:0" width="651" height="500"><text x="245.5" y="339.9" font-family="Liberation Sans" font-size="11" fill="#333" text-anchor="middle">Bishkek – PM2.5</text><rect x="52" y="361.8" width="425.7" height="1" fill="#e6e6e6"/><rect x="52" y="383.4" width="425.7" height="1" fill="#e6e6e6"/><rect x="52" y="405.0" width="425.7" height="1" fill="#e6e6e6"/><rect x="52" y="426.6" width="425.7" height="1" fill="#e6e6e6"/><rect x="52" y="448.2" width="425.7" height="1" fill="#e6e6e6"/><text x="43.2" y="364.3" font-family="Liberation Sans" font-size="7" fill="#555" text-anchor="end">500</text><text x="43.2" y="385.9" font-family="Liberation Sans" font-size="7" fill="#555" text-anchor="end">400</text><text x="43.2" y="407.5" font-family="Liberation Sans" font-size="7" fill="#555" text-anchor="end">300</text><text x="43.2" y="429.1" font-family="Liberation Sans" font-size="7" fill="#555" text-anchor="end">200</text><text x="43.2" y="450.7" font-family="Liberation Sans" font-size="7" fill="#555" text-anchor="end">100</text><text x="43.2" y="472.3" font-family="Liberation Sans" font-size="7" fill="#555" text-anchor="end">0</text><text transform="translate(25.5,414) rotate(-90)" font-family="Liberation Sans" font-size="7" fill="#666" text-anchor="middle">AQI</text><rect x="51.6" y="469.8" width="426.2" height="1" fill="#ccd6eb"/><rect x="51.10" y="470" width="1" height="5.5" fill="#ccd6eb"/><rect x="68.85" y="470" width="1" height="5.5" fill="#ccd6eb"/><rect x="86.61" y="470" width="1" height="5.5" fill="#ccd6eb"/><rect x="104.36" y="470" width="1" height="5.5" fill="#ccd6eb"/><rect x="122.12" y="470" width="1" height="5.5" fill="#ccd6eb"/><rect x="139.87" y="470" width="1" height="5.5" fill="#ccd6eb"/><rect x="157.62" y="470" width="1" height="5.5" fill="#ccd6eb"/><rect x="175.38" y="470" width="1" height="5.5" fill="#ccd6eb"/><rect x="193.13" y="470" width="1" height="5.5" fill="#ccd6eb"/><rect x="210.89" y="470" width="1" height="5.5" fill="#ccd6eb"/><rect x="228.64" y="470" width="1" height="5.5" fill="#ccd6eb"/><rect x="246.40" y="470" width="1" height="5.5" fill="#ccd6eb"/><rect x="264.15" y="470" width="1" height="5.5" fill="#ccd6eb"/><rect x="281.90" y="470" width="1" height="5.5" fill="#ccd6eb"/><rect x="299.66" y="470" width="1" height="5.5" fill="#ccd6eb"/><rect x="317.41" y="470" width="1" height="5.5" fill="#ccd6eb"/><rect x="335.17" y="470" width="1" height="5.5" fill="#ccd6eb"/><rect x="352.92" y="470" width="1" height="5.5" fill="#ccd6eb"/><rect x="370.68" y="470" width="1" height="5.5" fill="#ccd6eb"/><rect x="388.43" y="470" width="1" height="5.5" fill="#ccd6eb"/><rect x="406.18" y="470" width="1" height="5.5" fill="#ccd6eb"/><rect x="423.94" y="470" width="1" height="5.5" fill="#ccd6eb"/><rect x="441.69" y="470" width="1" height="5.5" fill="#ccd6eb"/><rect x="459.45" y="470" width="1" height="5.5" fill="#ccd6eb"/><rect x="477.20" y="470" width="1" height="5.5" fill="#ccd6eb"/><rect x="73.63" y="468.9" width="9.2" height="1.1" fill="#00e400" stroke="#333" stroke-width="0.8"/><rect x="91.39" y="467.0" width="9.2" height="3.0" fill="#00e400" stroke="#333" stroke-width="0.8"/><rect x="109.14" y="464.5" width="9.2" height="5.5" fill="#00e400" stroke="#333" stroke-width="0.8"/><rect x="126.89" y="462.2" width="9.2" height="7.8" fill="#00e400" stroke="#333" stroke-width="0.8"/><rect x="144.65" y="459.9" width="9.2" height="10.1" fill="#00e400" stroke="#333" stroke-width="0.8"/><rect x="162.40" y="455.3" width="9.2" height="14.7" fill="#ffff00" stroke="#333" stroke-width="0.8"/><rect x="180.16" y="445.9" width="9.2" height="24.1" fill="#ff7e00" stroke="#333" stroke-width="0.8"/><rect x="197.91" y="436.9" width="9.2" height="33.1" fill="#ff0000" stroke="#333" stroke-width="0.8"/><rect x="215.66" y="436.2" width="9.2" height="33.8" fill="#ff0000" stroke="#333" stroke-width="0.8"/><rect x="233.42" y="436.9" width="9.2" height="33.1" fill="#ff0000" stroke="#333" stroke-width="0.8"/><rect x="251.17" y="437.6" width="9.2" height="32.4" fill="#ff0000" stroke="#333" stroke-width="0.8"/><rect x="268.93" y="436.2" width="9.2" height="33.8" fill="#ff0000" stroke="#333" stroke-width="0.8"/><rect x="286.68" y="435.3" width="9.2" height="34.7" fill="#ff0000" stroke="#333" stroke-width="0.8"/><rect x="304.44" y="434.8" width="9.2" height="35.2" fill="#ff0000" stroke="#333" stroke-width="0.8"/><rect x="322.19" y="435.3" width="9.2" height="34.7" fill="#ff0000" stroke="#333" stroke-width="0.8"/><rect x="339.94" y="436.9" width="9.2" height="33.1" fill="#ff0000" stroke="#333" stroke-width="0.8"/><rect x="357.70" y="443.1" width="9.2" height="26.9" fill="#ff7e00" stroke="#333" stroke-width="0.8"/><rect x="375.45" y="449.8" width="9.2" height="20.2" fill="#ffff00" stroke="#333" stroke-width="0.8"/><rect x="393.21" y="455.8" width="9.2" height="14.2" fill="#ffff00" stroke="#333" stroke-width="0.8"/><rect x="410.96" y="458.1" width="9.2" height="11.9" fill="#ffff00" stroke="#333" stroke-width="0.8"/><rect x="428.71" y="461.0" width="9.2" height="9.0" fill="#00e400" stroke="#333" stroke-width="0.8"/><rect x="446.47" y="465.4" width="9.2" height="4.6" fill="#00e400" stroke="#333" stroke-width="0.8"/><rect x="464.22" y="465.9" width="9.2" height="4.1" fill="#00e400" stroke="#333" stroke-width="0.8"/><text transform="translate(62.68,478.9) rotate(-45)" font-family="Liberation Sans" font-size="7.3" fill="#666" text-anchor="end">9 AM</text><text transform="translate(80.43,478.9) rotate(-45)" font-family="Liberation Sans" font-size="7.3" fill="#666" text-anchor="end">10 AM</text><text transform="translate(98.19,478.9) rotate(-45)" font-family="Liberation Sans" font-size="7.3" fill="#666" text-anchor="end">11 AM</text><text transform="translate(115.94,478.9) rotate(-45)" font-family="Liberation Sans" font-size="7.3" fill="#666" text-anchor="end">12 PM</text><text transform="translate(133.69,478.9) rotate(-45)" font-family="Liberation Sans" font-size="7.3" fill="#666" text-anchor="end">1 PM</text><text transform="translate(151.45,478.9) rotate(-45)" font-family="Liberation Sans" font-size="7.3" fill="#666" text-anchor="end">2 PM</text><text transform="translate(169.20,478.9) rotate(-45)" font-family="Liberation Sans" font-size="7.3" fill="#666" text-anchor="end">3 PM</text><text transform="translate(186.96,478.9) rotate(-45)" font-family="Liberation Sans" font-size="7.3" fill="#666" text-anchor="end">4 PM</text><text transform="translate(204.71,478.9) rotate(-45)" font-family="Liberation Sans" font-size="7.3" fill="#666" text-anchor="end">5 PM</text><text transform="translate(222.46,478.9) rotate(-45)" font-family="Liberation Sans" font-size="7.3" fill="#666" text-anchor="end">6 PM</text><text transform="translate(240.22,478.9) rotate(-45)" font-family="Liberation Sans" font-size="7.3" fill="#666" text-anchor="end">7 PM</text><text transform="translate(257.97,478.9) rotate(-45)" font-family="Liberation Sans" font-size="7.3" fill="#666" text-anchor="end">8 PM</text><text transform="translate(275.73,478.9) rotate(-45)" font-family="Liberation Sans" font-size="7.3" fill="#666" text-anchor="end">9 PM</text><text transform="translate(293.48,478.9) rotate(-45)" font-family="Liberation Sans" font-size="7.3" fill="#666" text-anchor="end">10 PM</text><text transform="translate(311.24,478.9) rotate(-45)" font-family="Liberation Sans" font-size="7.3" fill="#666" text-anchor="end">11 PM</text><text transform="translate(328.99,478.9) rotate(-45)" font-family="Liberation Sans" font-size="7.3" fill="#666" text-anchor="end">11-10-2020 12 AM</text><text transform="translate(346.74,478.9) rotate(-45)" font-family="Liberation Sans" font-size="7.3" fill="#666" text-anchor="end">1 AM</text><text transform="translate(364.50,478.9) rotate(-45)" font-family="Liberation Sans" font-size="7.3" fill="#666" text-anchor="end">2 AM</text><text transform="translate(382.25,478.9) rotate(-45)" font-family="Liberation Sans" font-size="7.3" fill="#666" text-anchor="end">3 AM</text><text transform="translate(400.01,478.9) rotate(-45)" font-family="Liberation Sans" font-size="7.3" fill="#666" text-anchor="end">4 AM</text><text transform="translate(417.76,478.9) rotate(-45)" font-family="Liberation Sans" font-size="7.3" fill="#666" text-anchor="end">5 AM</text><text transform="translate(435.51,478.9) rotate(-45)" font-family="Liberation Sans" font-size="7.3" fill="#666" text-anchor="end">6 AM</text><text transform="translate(453.27,478.9) rotate(-45)" font-family="Liberation Sans" font-size="7.3" fill="#666" text-anchor="end">7 AM</text><text transform="translate(471.02,478.9) rotate(-45)" font-family="Liberation Sans" font-size="7.3" fill="#666" text-anchor="end">8 AM</text></svg>
<div style="position:absolute;left:492px;top:325.6px;width:147.8px;height:171.2px;background:#efefef;border:0.8px solid #1e4f7e"></div>
<div style="position:absolute;left:492px;top:325.6px;width:149.4px;height:44.3px;background:#02477f"></div>
<div style="position:absolute;left:492.8px;top:369.9px;width:147.8px;height:66.7px;background:#00e400"></div>
<div class="t" style="left:492.70px;width:148px;text-align:center;top:332.07px;font-size:8.9px;line-height:8.9px;color:#fff;font-weight:bold">Current Conditions</div>
<div class="t" style="left:492.70px;width:148px;text-align:center;top:344.81px;font-size:7.2px;line-height:7.2px;color:#fff;font-weight:bold">observed at</div>
<div class="t" style="left:492.70px;width:148px;text-align:center;top:356.47px;font-size:8.9px;line-height:8.9px;color:#fff;font-weight:bold">Nov 9, 2020 8:00 AM (LT)</div>
<div class="t" style="left:492.70px;width:148px;text-align:center;top:381.77px;font-size:11.5px;line-height:11.5px;color:#000;font-weight:bold">19 AQI</div>
<div class="t" style="left:492.70px;width:148px;text-align:center;top:397.77px;font-size:11.5px;line-height:11.5px;color:#000;font-weight:bold">Good</div>
<div class="t" style="left:492.70px;width:148px;text-align:center;top:414.17px;font-size:11.5px;line-height:11.5px;color:#000;font-weight:bold">PM2.5</div>
<div class="t" style="left:492.70px;width:148px;text-align:center;top:443.79px;font-size:7.1px;line-height:7.1px;color:#333;font-weight:bold">Health Message</div>
<div class="t" style="left:496.10px;top:458.53px;font-size:7.05px;line-height:7.05px;color:#333">The AQI value for your community is</div>
<div class="t" style="left:496.10px;top:470.83px;font-size:7.05px;line-height:7.05px;color:#333">between 0 and 50. Air quality is satisfactory</div>
<div class="t" style="left:496.10px;top:483.13px;font-size:7.05px;line-height:7.05px;color:#333">and poses little or no health risk.</div>
</body></html>
